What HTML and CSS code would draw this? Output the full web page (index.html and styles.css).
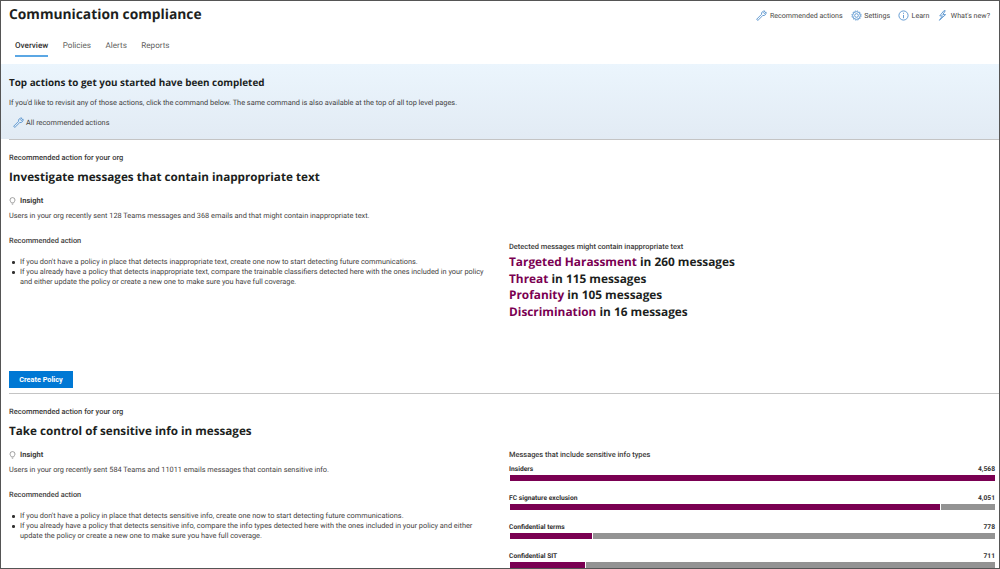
FILE: index.html
```html
<!DOCTYPE html>
<html lang="en">
<head>
    <meta charset="UTF-8">
    <title>Communication compliance</title>
    <link rel="stylesheet" href="styles.css">
</head>
<body>
    <div class="page">
        <header class="top-bar">
            <h1>Communication compliance</h1>
            <nav class="top-links">
                <a class="top-link">
                    <svg class="icon" viewBox="0 0 12 12"><path d="M1 9.8 L6.1 4.7 C5.5 2.6 7.6 .6 9.9 1.2 L8.2 3 L9.2 4 L11 2.3 C11.5 4.6 9.5 6.6 7.4 6 L2.3 11.1 C1.6 11.6 .5 10.5 1 9.8 Z"/></svg>
                    Recommended actions
                </a>
                <a class="top-link">
                    <svg class="icon" viewBox="0 0 12 12"><circle cx="6" cy="6" r="2"/><circle cx="6" cy="6" r="4.2"/><circle cx="6" cy="6" r="5" stroke-dasharray="1.4 1.2"/></svg>
                    Settings
                </a>
                <a class="top-link">
                    <svg class="icon" viewBox="0 0 12 12"><circle cx="6" cy="6" r="5"/><path d="M6 5.4 V9 M6 3 V4.2"/></svg>
                    Learn
                </a>
                <a class="top-link">
                    <svg class="icon" viewBox="0 0 12 12"><path d="M7.5 .8 L3 6.4 H6 L2.6 11.2 L9.4 5 H6.4 L9 .8 Z"/></svg>
                    What's new?
                </a>
            </nav>
        </header>

        <nav class="tabs">
            <a class="tab tab-active">Overview</a>
            <a class="tab">Policies</a>
            <a class="tab">Alerts</a>
            <a class="tab">Reports</a>
        </nav>

        <section class="banner">
            <h2>Top actions to get you started have been completed</h2>
            <p>If you'd like to revisit any of those actions, click the command below. The same command is also available at the top of all top level pages.</p>
            <a class="banner-link">
                <svg class="icon" viewBox="0 0 12 12"><path d="M1 9.8 L6.1 4.7 C5.5 2.6 7.6 .6 9.9 1.2 L8.2 3 L9.2 4 L11 2.3 C11.5 4.6 9.5 6.6 7.4 6 L2.3 11.1 C1.6 11.6 .5 10.5 1 9.8 Z"/></svg>
                All recommended actions
            </a>
        </section>

        <section class="action action-first">
            <div class="eyebrow">Recommended action for your org</div>
            <h2 class="action-title">Investigate messages that contain inappropriate text</h2>
            <div class="insight">
                <svg class="bulb" viewBox="0 0 10 12"><path d="M3.4 8 C3.2 6.6 1.4 6 1.4 4 A3.6 3.6 0 0 1 8.6 4 C8.6 6 6.8 6.6 6.6 8 Z M4 9.8 H6"/></svg>
                Insight
            </div>
            <div class="action-columns">
                <div class="action-left">
                    <p class="summary">Users in your org recently sent 128 Teams messages and 368 emails and that might contain inappropriate text.</p>
                    <h3>Recommended action</h3>
                    <ul>
                        <li>If you don't have a policy in place that detects inappropriate text, create one now to start detecting future communications.</li>
                        <li>If you already have a policy that detects inappropriate text, compare the trainable classifiers detected here with the ones included in your policy and either update the policy or create a new one to make sure you have full coverage.</li>
                    </ul>
                </div>
                <div class="action-right detected">
                    <h4>Detected messages might contain inappropriate text</h4>
                    <div class="detected-row"><b>Targeted Harassment</b> in 260 messages</div>
                    <div class="detected-row"><b>Threat</b> in 115 messages</div>
                    <div class="detected-row"><b>Profanity</b> in 105 messages</div>
                    <div class="detected-row"><b>Discrimination</b> in 16 messages</div>
                </div>
            </div>
            <button class="primary-btn">Create Policy</button>
        </section>

        <section class="action">
            <div class="eyebrow">Recommended action for your org</div>
            <h2 class="action-title">Take control of sensitive info in messages</h2>
            <div class="insight">
                <svg class="bulb" viewBox="0 0 10 12"><path d="M3.4 8 C3.2 6.6 1.4 6 1.4 4 A3.6 3.6 0 0 1 8.6 4 C8.6 6 6.8 6.6 6.6 8 Z M4 9.8 H6"/></svg>
                Insight
            </div>
            <div class="action-columns">
                <div class="action-left">
                    <p class="summary">Users in your org recently sent 584 Teams and 11011 emails messages that contain sensitive info.</p>
                    <h3>Recommended action</h3>
                    <ul>
                        <li>If you don't have a policy in place that detects sensitive info, create one now to start detecting future communications.</li>
                        <li>If you already have a policy that detects sensitive info, compare the info types detected here with the ones included in your policy and either update the policy or create a new one to make sure you have full coverage.</li>
                    </ul>
                </div>
                <div class="action-right chart">
                    <h4>Messages that include sensitive info types</h4>
                    <div class="bar-row">
                        <div class="bar-label"><span>Insiders</span><span>4,568</span></div>
                        <div class="bar"><div class="bar-fill" style="width: 100%"></div></div>
                    </div>
                    <div class="bar-row">
                        <div class="bar-label"><span>FC signature exclusion</span><span>4,051</span></div>
                        <div class="bar"><div class="bar-fill" style="width: 88.7%"></div><div class="bar-rest"></div></div>
                    </div>
                    <div class="bar-row">
                        <div class="bar-label"><span>Confidential terms</span><span>778</span></div>
                        <div class="bar"><div class="bar-fill" style="width: 16.9%"></div><div class="bar-rest"></div></div>
                    </div>
                    <div class="bar-row">
                        <div class="bar-label"><span>Confidential SIT</span><span>711</span></div>
                        <div class="bar"><div class="bar-fill" style="width: 15.4%"></div><div class="bar-rest"></div></div>
                    </div>
                </div>
            </div>
        </section>
    </div>
</body>
</html>
```

FILE: styles.css
```css
/* General Styles */
html, body {
    margin: 0;
    padding: 0;
    height: 100%;
    overflow: hidden;
}

body {
    font-family: Roboto, 'Noto Sans', sans-serif;
    font-size: 7.35px;
    color: #3f3e3d;
    background-color: #ffffff;
    text-rendering: geometricPrecision;
}

.page {
    box-sizing: border-box;
    height: 569px;
    border: 1px solid #555555;
    overflow: hidden;
}

h1, h2, h3, h4, p, ul {
    margin: 0;
    padding: 0;
}

.icon {
    width: 11px;
    height: 11px;
    fill: none;
    stroke: #5a95cf;
    stroke-width: 1;
    flex: none;
}

/* Top bar */
.top-bar {
    display: flex;
    justify-content: space-between;
    padding: 3px 9px 0 8px;
    height: 23px;
}

.top-bar h1 {
    font-family: 'Open Sans', sans-serif;
    font-size: 13.8px;
    line-height: 21px;
    font-weight: 700;
    color: #201f1e;
}

.top-links {
    display: flex;
    gap: 8px;
    padding-top: 5px;
    height: 12px;
}

.top-link {
    display: flex;
    align-items: center;
    gap: 2.5px;
    font-size: 7.1px;
    color: #484644;
}

/* Tabs */
.tabs {
    display: flex;
    gap: 14.5px;
    padding-left: 14px;
    height: 37px;
}

.tab {
    box-sizing: border-box;
    height: 30px;
    padding-top: 12px;
    font-size: 8.1px;
    line-height: 12px;
    color: #605e5c;
}

.tab-active {
    color: #323130;
    font-weight: 500;
    border-bottom: 2px solid #5ba7e4;
}

/* Banner */
.banner {
    box-sizing: border-box;
    height: 75px;
    padding: 10px 8px 0;
    background: linear-gradient(#ebf5fd, #e2ebf4);
}

.banner h2 {
    font-family: 'Open Sans', sans-serif;
    font-size: 9.9px;
    line-height: 16px;
    font-weight: 700;
    color: #201f1e;
}

.banner p {
    margin-top: 7px;
    line-height: 11px;
}

.banner-link {
    display: flex;
    align-items: center;
    gap: 2px;
    margin: 9px 0 0 4px;
    line-height: 11px;
    color: #484644;
}

/* Recommended action sections */
.action {
    margin-left: 8px;
    border-top: 1px solid #c4c4c4;
    padding-top: 12px;
}

.action-first {
    height: 254px;
    box-sizing: border-box;
    position: relative;
}

.eyebrow {
    font-size: 7.5px;
    line-height: 11px;
    font-weight: 500;
    color: #3b3a39;
}

.action-title {
    margin-top: 4px;
    font-family: 'Open Sans', sans-serif;
    font-size: 11.7px;
    line-height: 20px;
    font-weight: 700;
    color: #201f1e;
}

.insight {
    display: flex;
    align-items: center;
    gap: 4px;
    margin-top: 8px;
    font-size: 7.5px;
    line-height: 12px;
    font-weight: 700;
}

.bulb {
    width: 7px;
    height: 9px;
    fill: none;
    stroke: #7a7a7a;
    stroke-width: 1;
}

.action-columns {
    display: grid;
    grid-template-columns: 500px 1fr;
}

.action-left {
    padding-right: 20px;
}

.summary {
    margin-top: 3px;
    line-height: 11px;
}

.action-left h3 {
    margin-top: 14px;
    font-size: 7.4px;
    line-height: 11px;
    font-weight: 500;
}

.action-left ul {
    margin-top: 11px;
    padding-left: 11px;
    line-height: 10px;
    list-style: none;
}

.action-left li {
    position: relative;
}

.action-left li::before {
    content: "";
    position: absolute;
    left: -8px;
    top: 4px;
    width: 2.5px;
    height: 2.5px;
    border-radius: 50%;
    background-color: #323130;
}

/* Detected messages list */
.detected h4,
.chart h4 {
    font-size: 7.45px;
    line-height: 11px;
    font-weight: 500;
    color: #3b3a39;
}

.detected {
    margin-top: 34px;
}

.detected h4 {
    margin-bottom: 2px;
}

.detected-row {
    font-family: 'Open Sans', sans-serif;
    font-size: 11.85px;
    line-height: 16.5px;
    font-weight: 700;
    color: #201f1e;
}

.detected-row b {
    font-weight: 700;
    color: #7a0052;
}

.primary-btn {
    position: absolute;
    left: 0;
    bottom: 5px;
    width: 64px;
    height: 17px;
    padding: 0;
    border: 0;
    background-color: #0078d4;
    color: #ffffff;
    font-family: inherit;
    font-size: 7.3px;
    font-weight: 700;
}

/* Bars */
.chart {
    margin-top: -12px;
    padding-right: 4px;
}

.chart h4 {
    margin-bottom: 4px;
}

.bar-row {
    height: 29px;
}

.bar-label {
    display: flex;
    justify-content: space-between;
    font-size: 6.7px;
    line-height: 10px;
    font-weight: 700;
    color: #323130;
}

.bar {
    display: flex;
    gap: 1px;
    height: 6px;
    margin: 1px 0 0 1px;
}

.bar-rest {
    flex: 1;
    background-color: #939393;
}

.bar-fill {
    background-color: #7a0052;
}
```
